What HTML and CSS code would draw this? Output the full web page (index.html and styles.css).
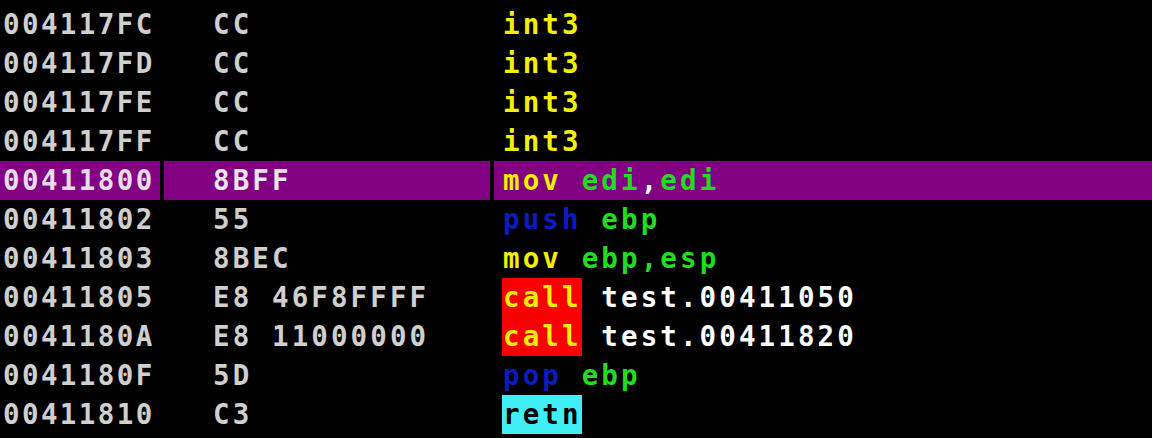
FILE: index.html
```html
<!DOCTYPE html>
<html>
<head>
<meta charset="utf-8">
<link rel="stylesheet" href="styles.css">
</head>
<body>
<div class="view">
  <div class="row"><div class="addr">004117FC</div><div class="hex">CC</div><div class="dis"><span class="mn y">int3</span></div></div>
  <div class="row"><div class="addr">004117FD</div><div class="hex">CC</div><div class="dis"><span class="mn y">int3</span></div></div>
  <div class="row"><div class="addr">004117FE</div><div class="hex">CC</div><div class="dis"><span class="mn y">int3</span></div></div>
  <div class="row"><div class="addr">004117FF</div><div class="hex">CC</div><div class="dis"><span class="mn y">int3</span></div></div>
  <div class="row sel"><div class="addr">00411800</div><div class="hex">8BFF</div><div class="dis"><span class="mn y">mov</span> <span class="g">edi</span><span class="w">,</span><span class="g">edi</span></div></div>
  <div class="row"><div class="addr">00411802</div><div class="hex">55</div><div class="dis"><span class="mn b">push</span> <span class="g">ebp</span></div></div>
  <div class="row"><div class="addr">00411803</div><div class="hex">8BEC</div><div class="dis"><span class="mn y">mov</span> <span class="g">ebp</span><span class="g">,</span><span class="g">esp</span></div></div>
  <div class="row"><div class="addr">00411805</div><div class="hex">E8 46F8FFFF</div><div class="dis"><span class="mn y call">call</span> <span class="w">test.00411050</span></div></div>
  <div class="row"><div class="addr">0041180A</div><div class="hex">E8 11000000</div><div class="dis"><span class="mn y call">call</span> <span class="w">test.00411820</span></div></div>
  <div class="row"><div class="addr">0041180F</div><div class="hex">5D</div><div class="dis"><span class="mn b">pop</span> <span class="g">ebp</span></div></div>
  <div class="row"><div class="addr">00411810</div><div class="hex">C3</div><div class="dis"><span class="mn k ret">retn</span></div></div>
</div>
</body>
</html>
```
FILE: styles.css
```css
html, body {
  margin: 0;
  padding: 0;
  background: #000;
}
.view {
  padding-top: 5px;
  font-family: "DejaVu Sans Mono", "Liberation Mono", monospace;
  font-weight: bold;
  font-size: 27.5px;
  letter-spacing: 3.1px;
  color: #cfcfcf;
}
.row {
  display: grid;
  grid-template-columns: 160px 326px 1fr;
  column-gap: 4px;
  height: 39px;
  line-height: 39px;
  white-space: pre;
}
.addr { padding-left: 3px; letter-spacing: 2.4px; }
.hex { padding-left: 49px; }
.dis { padding-left: 9px; }
.sel .addr, .sel .hex, .sel .dis {
  background: #820082;
}
.sel .addr { color: #e8dcea; }
.sel .hex { color: #ece4ee; }
.mn { display: inline-block; }
.y { color: #f2f000; }
.g { color: #22dc22; }
.b { color: #0a1cc0; }
.w { color: #ffffff; }
.k { color: #000; }
.call {
  background: #f80000;
  padding-left: 1px;
  margin-left: -1px;
}
.ret {
  background: #40eef6;
  padding-left: 1px;
  margin-left: -1px;
}
```
